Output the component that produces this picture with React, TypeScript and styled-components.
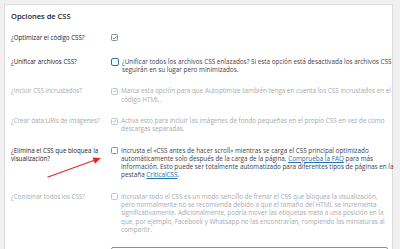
import React from "react";
import styled, { createGlobalStyle } from "styled-components";

const Global = createGlobalStyle`
  html, body { margin: 0; padding: 0; background: #f0f0f1; }
  body { font-family: "Open Sans", "Noto Sans", sans-serif; color: #3c434a; }
  #root { height: 249px; overflow: hidden; }
`;

const Page = styled.div`
  position: relative;
  padding: 4px 7px 0 4px;
`;

const Panel = styled.section`
  background: #fff;
  border: 1px solid #dcdcde;
  border-bottom: none;
  padding: 6px 4px 0 6px;
`;

const Title = styled.h2`
  margin: 0 0 6px 0;
  font-size: 7.5px;
  line-height: 10px;
  font-weight: 600;
  color: #1d2327;
`;

const Table = styled.div`
  display: grid;
  grid-template-columns: 100px 1fr;
`;

const Label = styled.div<{ $disabled?: boolean; $top?: number }>`
  padding: ${(p) => p.$top ?? 6.5}px 8px 6.5px 0;
  font-size: 6.2px;
  line-height: 8.3px;
  color: ${(p) => (p.$disabled ? "#a7aaad" : "#1d2327")};
`;

const Control = styled.div<{ $disabled?: boolean; $top?: number }>`
  padding: ${(p) => p.$top ?? 6.5}px 0 6.5px 0;
  min-height: 10.3px;
  display: flex;
  align-items: flex-start;
  gap: 3px;
  font-size: 6.35px;
  line-height: 8.3px;
  color: ${(p) => (p.$disabled ? "#a7aaad" : "#3c434a")};
`;

const Box = styled.span<{ $focus?: boolean; $disabled?: boolean }>`
  flex: none;
  box-sizing: border-box;
  width: 7px;
  height: 7px;
  margin-top: 0.6px;
  border-radius: 1.5px;
  border: ${(p) =>
    p.$focus ? "1.3px solid #2271b1" : `0.8px solid ${p.$disabled ? "#c3c4c7" : "#8c8f94"}`};
  background: #fff;
  display: flex;
  align-items: center;
  justify-content: center;
  ${(p) => (p.$focus ? "width: 8px; height: 8px; margin-top: 0; border-radius: 2px;" : "")}
`;

const Desc = styled.div`
  flex: 1;
  white-space: nowrap;
`;

const Link = styled.a`
  color: #2271b1;
  text-decoration: underline;
`;

const Input = styled.div`
  flex: 1;
  height: 14px;
  margin-right: 5px;
  border: 0.8px solid #8c8f94;
  border-radius: 2px;
  box-sizing: border-box;
`;

const Arrow = styled.svg`
  position: absolute;
  left: 0;
  top: 0;
  pointer-events: none;
`;

const Check = ({ light }: { light?: boolean }) => (
  <svg width="6" height="6" viewBox="0 0 10 10">
    <path
      d="M2 5.2 L4.1 7.2 L8.2 2.6"
      fill="none"
      stroke={light ? "#8fb6de" : "#3582c4"}
      strokeWidth="1.6"
      strokeLinecap="round"
      strokeLinejoin="round"
    />
  </svg>
);

export default function App() {
  return (
    <Page>
      <Global />
      <Panel>
        <Title>Opciones de CSS</Title>
        <Table>
          <Label>¿Optimizar el código CSS?</Label>
          <Control>
            <Box>
              <Check />
            </Box>
          </Control>

          <Label $top={7.5}>¿Unificar archivos CSS?</Label>
          <Control $top={7.5}>
            <Box $focus />
            <Desc>
              ¿Unificar todos los archivos CSS enlazados? Si esta opción está desactivada los archivos CSS
              <br />
              seguirán en su lugar pero minimizados.
            </Desc>
          </Control>

          <Label $disabled>¿Incluir CSS incrustados?</Label>
          <Control $disabled>
            <Box $disabled>
              <Check light />
            </Box>
            <Desc>
              Marca esta opción para que Autoptimize también tenga en cuenta los CSS incrustados en el
              <br />
              código HTML.
            </Desc>
          </Control>

          <Label $disabled>¿Crear data:URIs de imágenes?</Label>
          <Control $disabled>
            <Box $disabled>
              <Check light />
            </Box>
            <Desc>
              Activa esto para incluir las imágenes de fondo pequeñas en el propio CSS en vez de como
              <br />
              descargas separadas.
            </Desc>
          </Control>

          <Label>
            ¿Elimina el CSS que bloquea la
            <br />
            visualización?
          </Label>
          <Control>
            <Box />
            <Desc>
              Incrusta el «CSS antes de hacer scroll» mientras se carga el CSS principal optimizado
              <br />
              automáticamente solo después de la carga de la página. <Link>Comprueba la FAQ</Link> para más
              <br />
              información. Esto puede ser totalmente automatizado para diferentes tipos de páginas en la
              <br />
              pestaña <Link>CriticalCSS</Link>.
            </Desc>
          </Control>

          <Label $disabled>¿Combinar todos los CSS?</Label>
          <Control $disabled>
            <Box $disabled />
            <Desc>
              Incrustar todo el CSS es un modo sencillo de frenar el CSS que bloquea la visualización,
              <br />
              pero normalmente no se recomienda debido a que el tamaño del HTML se incrementa
              <br />
              significativamente. Adicionalmente, podría mover las etiquetas meta a una posición en la
              <br />
              que, por ejemplo, Facebook y Whatsapp no las encontrarían, rompiendo las miniaturas al
              <br />
              compartir.
            </Desc>
          </Control>

          <Label $top={8}>CSS en línea de Autoptimize:</Label>
          <Control $top={6}>
            <Input />
          </Control>
        </Table>
      </Panel>
      <Arrow width="400" height="249" viewBox="0 0 400 249">
        <line x1="48" y1="177" x2="95" y2="160" stroke="#e3262a" strokeWidth="1.3" strokeLinecap="round" />
        <polygon points="101,158 92.5,157.6 95,163.8" fill="#e3262a" />
      </Arrow>
    </Page>
  );
}
